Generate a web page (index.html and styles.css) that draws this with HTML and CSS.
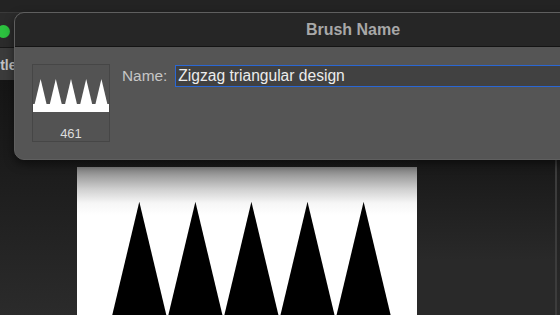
FILE: index.html
```html
<!DOCTYPE html>
<html>
<head>
<meta charset="utf-8">
<link rel="stylesheet" href="styles.css">
</head>
<body>
<div class="app">
  <div class="topstrip"></div>
  <div class="titlebar"><span class="dot"></span></div>
  <div class="tabs"><span class="tab">Title</span></div>
  <div class="workspace">
    <div class="gutter"></div>
    <div class="canvas">
      <svg width="340" height="148" viewBox="0 0 340 148">
        <polygon points="62.3,34.7 34.8,150 89.8,150" fill="#000"/>
        <polygon points="118.4,34.7 90.9,150 145.9,150" fill="#000"/>
        <polygon points="174.4,34.7 146.9,150 201.9,150" fill="#000"/>
        <polygon points="230.5,34.7 203,150 258,150" fill="#000"/>
        <polygon points="286.6,34.7 259.1,150 314.1,150" fill="#000"/>
      </svg>
    </div>
    <div class="side"></div>
    <div class="edge"></div>
  </div>
</div>

<div class="dialog">
  <div class="dlg-title">Brush Name</div>
  <div class="dlg-body">
    <div class="preview">
      <svg class="thumb" width="76" height="34" viewBox="0 0 76 34">
        <polygon points="0,33 7.6,1 15.2,33" fill="#fff"/>
        <polygon points="15.2,33 22.8,1 30.4,33" fill="#fff"/>
        <polygon points="30.4,33 38,1 45.6,33" fill="#fff"/>
        <polygon points="45.6,33 53.2,1 60.8,33" fill="#fff"/>
        <polygon points="60.8,33 68.4,1 76,33" fill="#fff"/>
        <rect x="0" y="26" width="76" height="8" fill="#fff"/>
      </svg>
      <div class="count">461</div>
    </div>
    <div class="field">
      <label class="label">Name:</label>
      <div class="input">Zigzag triangular design</div>
    </div>
  </div>
</div>
</body>
</html>
```

FILE: styles.css
```css
html, body {
  margin: 0;
  padding: 0;
  width: 560px;
  height: 315px;
  overflow: hidden;
  background: #1e1e1e;
  font-family: "Liberation Sans", Arial, sans-serif;
}

.app {
  display: flex;
  flex-direction: column;
  width: 560px;
  height: 315px;
}

.topstrip {
  height: 12px;
  background: #232323;
  flex: none;
}

.titlebar {
  height: 34px;
  background: #2b2b2b;
  border-top: 1px solid #3a3a3a;
  border-bottom: 1px solid #181818;
  flex: none;
  display: flex;
  align-items: center;
}

.dot {
  width: 13px;
  height: 13px;
  border-radius: 50%;
  background: #2cc23f;
  margin-left: -3px;
  margin-top: 2px;
}

.tabs {
  height: 32px;
  background: #3b3b3b;
  flex: none;
  display: flex;
  align-items: center;
  overflow: hidden;
}

.tab {
  color: #c4c4c4;
  font-weight: bold;
  font-size: 14px;
  margin-left: -12px;
  margin-top: 2px;
}

.workspace {
  flex: 1;
  display: flex;
  background: linear-gradient(#151515, #1c1c1c 90px, #2b2b2b);
}

.gutter {
  width: 77px;
  flex: none;
}

.canvas {
  width: 340px;
  margin-top: 87px;
  background: linear-gradient(#7e7e7e, #cfcfcf 22px, #f6f6f6 36px, #ffffff 48px);
  flex: none;
  overflow: hidden;
}

.canvas svg {
  display: block;
}

.side {
  flex: 1;
  background: linear-gradient(#151515, #1a1a1a 90px, #292929 180px);
}

.edge {
  width: 2px;
  background: #3c3c3c;
  margin-right: 3px;
}

.dialog {
  position: absolute;
  top: 12px;
  left: 14px;
  width: 678px;
  height: 148px;
  box-sizing: border-box;
  border: 1px solid #5f5f5f;
  border-radius: 10px;
  overflow: hidden;
  background: #555555;
  display: flex;
  flex-direction: column;
  box-shadow: 0 4px 10px rgba(0,0,0,0.5);
}

.dlg-title {
  height: 33px;
  flex: none;
  background: #262626;
  border-bottom: 1px solid #141414;
  color: #a8a8a8;
  font-weight: bold;
  font-size: 16px;
  display: flex;
  align-items: center;
  justify-content: center;
}

.dlg-body {
  flex: 1;
  display: flex;
  align-items: flex-start;
  padding: 17px 0 0 17px;
  gap: 12px;
}

.preview {
  width: 78px;
  height: 78px;
  box-sizing: border-box;
  border: 1px solid #464646;
  background: #535353;
  display: flex;
  flex-direction: column;
  align-items: center;
}

.thumb {
  display: block;
  margin-top: 13px;
}

.count {
  margin-top: 14px;
  color: #dcdcdc;
  font-size: 13px;
}

.field {
  display: flex;
  align-items: center;
  gap: 8px;
  margin-top: 1px;
}

.label {
  color: #c6c6c6;
  font-size: 15.4px;
}

.input {
  width: 500px;
  height: 22px;
  box-sizing: border-box;
  border: 1px solid #2a67d4;
  background: #414141;
  color: #ececec;
  font-size: 15.6px;
  line-height: 20px;
  padding-left: 2px;
}
```
